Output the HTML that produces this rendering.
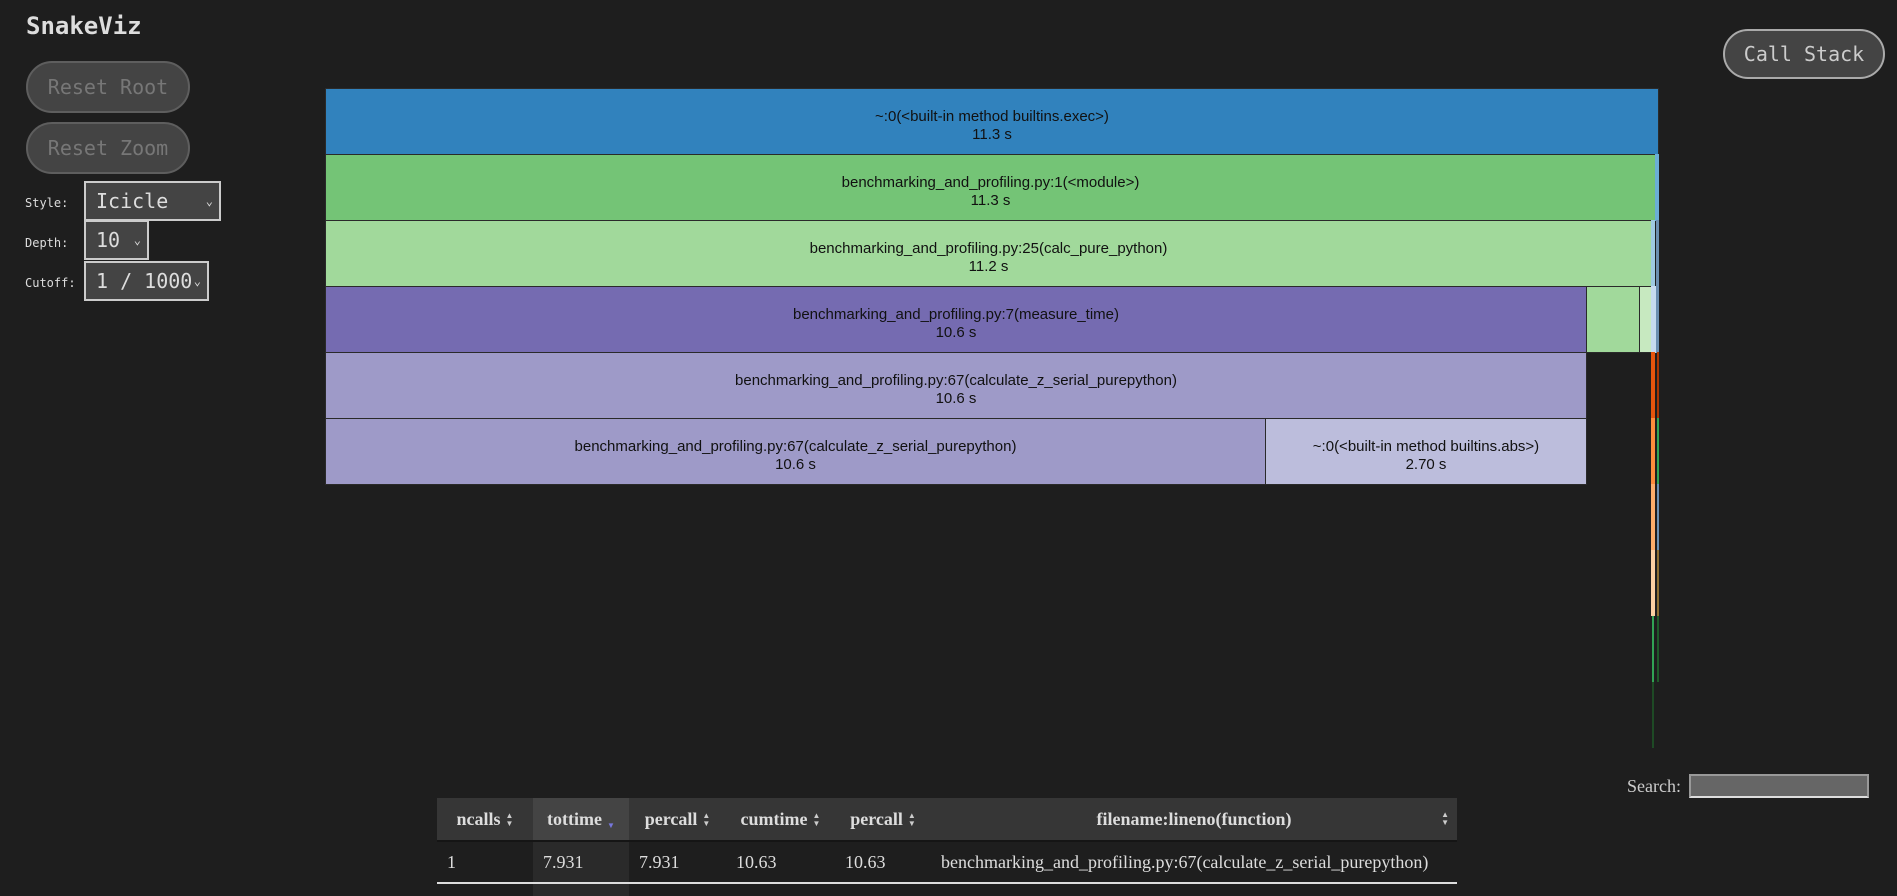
<!DOCTYPE html>
<html style="height:896px;overflow:hidden"><head><meta charset="utf-8"><style>
body{margin:0;width:1897px;height:896px;background:#1e1e1e;overflow:hidden;position:relative;font-family:"DejaVu Sans Mono","Liberation Mono",monospace;}
.a{position:absolute;}
h1{position:absolute;left:26px;top:12px;margin:0;font:bold 24px "DejaVu Sans Mono",monospace;color:#ddd;}
.btn{position:absolute;left:26px;width:160px;height:48px;border:2px solid #5e5e5e;border-radius:26px;background:#444;color:#777;font:20px "DejaVu Sans Mono",monospace;text-align:center;line-height:48px;box-sizing:content-box;}
.lbl{position:absolute;left:25px;font:12px "DejaVu Sans Mono",monospace;color:#ddd;}
.sel{position:absolute;left:84px;background:#444;border:2px solid #ccc;color:#ddd;font:20px "DejaVu Sans Mono",monospace;box-sizing:border-box;padding-left:10px;line-height:36px;}
.sel span{position:absolute;right:6px;top:0;font-size:12px;}
.r{position:absolute;box-sizing:border-box;border:1px solid #2a2a2a;font:15px "Liberation Sans",sans-serif;color:#111;text-align:center;padding-top:19px;line-height:18px;overflow:hidden;}
table{position:absolute;left:437px;top:798px;width:1020px;border-collapse:collapse;table-layout:fixed;font:18px "Liberation Serif",serif;color:#ddd;}
th{background:#363636;height:42px;font-weight:bold;padding:0 4px;white-space:nowrap;}
td{height:40px;padding:0 10px;text-align:left;white-space:nowrap;}
th i{font-style:normal;font-size:8px;line-height:8px;color:#ccc;margin-left:5px;display:inline-block;vertical-align:middle;}
</style></head><body>
<h1>SnakeViz</h1>
<div class="btn" style="top:61px">Reset Root</div>
<div class="btn" style="top:122px">Reset Zoom</div>
<div class="lbl" style="top:196px">Style:</div>
<div class="lbl" style="top:236px">Depth:</div>
<div class="lbl" style="top:276px">Cutoff:</div>
<div class="sel" style="top:181px;width:137px;height:40px">Icicle<span>⌄</span></div>
<div class="sel" style="top:220px;width:65px;height:40px">10<span>⌄</span></div>
<div class="sel" style="top:261px;width:125px;height:40px">1 / 1000<span>⌄</span></div>
<div class="a" style="left:1723px;top:29px;width:158px;height:46px;border:2px solid #aaa;border-radius:25px;background:#444;color:#ccc;font:20px 'DejaVu Sans Mono',monospace;text-align:center;line-height:46px">Call Stack</div>

<div class="r" style="left:325px;top:88px;width:1334px;height:67px;background:#3182bd">~:0(&lt;built-in method builtins.exec&gt;)<br>11.3 s</div>
<div class="r" style="left:325px;top:154px;width:1331px;height:67px;background:#74c476">benchmarking_and_profiling.py:1(&lt;module&gt;)<br>11.3 s</div>
<div class="r" style="left:1655px;top:154px;width:4px;height:67px;background:#6baed6;border:none"></div>
<div class="r" style="left:325px;top:220px;width:1327px;height:67px;background:#a1d99b">benchmarking_and_profiling.py:25(calc_pure_python)<br>11.2 s</div>
<div class="r" style="left:1651px;top:220px;width:4px;height:67px;background:#9ecae1;border:none"></div>
<div class="r" style="left:1656px;top:220px;width:3px;height:67px;background:#6b8fb0;border:none"></div>
<div class="r" style="left:325px;top:286px;width:1262px;height:67px;background:#756bb1">benchmarking_and_profiling.py:7(measure_time)<br>10.6 s</div>
<div class="r" style="left:1586px;top:286px;width:54px;height:67px;background:#a1d99b"></div>
<div class="r" style="left:1639px;top:286px;width:13px;height:67px;background:#c7e9c0"></div>
<div class="r" style="left:1651px;top:286px;width:5px;height:67px;background:#c6dbef;border:none"></div>
<div class="r" style="left:1656px;top:286px;width:3px;height:67px;background:#6b8fb0;border:none"></div>
<div class="r" style="left:325px;top:352px;width:1262px;height:67px;background:#9e9ac8">benchmarking_and_profiling.py:67(calculate_z_serial_purepython)<br>10.6 s</div>
<div class="r" style="left:325px;top:418px;width:941px;height:67px;background:#9e9ac8">benchmarking_and_profiling.py:67(calculate_z_serial_purepython)<br>10.6 s</div>
<div class="r" style="left:1265px;top:418px;width:322px;height:67px;background:#bcbddc">~:0(&lt;built-in method builtins.abs&gt;)<br>2.70 s</div>
<div class="a" style="left:1651px;top:352px;width:4px;height:66px;background:#e6550d"></div>
<div class="a" style="left:1657px;top:352px;width:2px;height:66px;background:#a63603"></div>
<div class="a" style="left:1651px;top:418px;width:4px;height:66px;background:#fd8d3c"></div>
<div class="a" style="left:1657px;top:418px;width:2px;height:66px;background:#31a354"></div>
<div class="a" style="left:1651px;top:484px;width:4px;height:66px;background:#fdae6b"></div>
<div class="a" style="left:1657px;top:484px;width:2px;height:66px;background:#6b8fb0"></div>
<div class="a" style="left:1651px;top:550px;width:4px;height:66px;background:#fdd0a2"></div>
<div class="a" style="left:1657px;top:550px;width:2px;height:66px;background:#8c6d31"></div>
<div class="a" style="left:1652px;top:616px;width:2px;height:66px;background:#31a354"></div>
<div class="a" style="left:1657px;top:616px;width:2px;height:66px;background:#1e5a2a"></div>
<div class="a" style="left:1652px;top:682px;width:2px;height:66px;background:#1e4a25"></div>

<div class="a" style="left:1627px;top:776px;font:18px 'Liberation Serif',serif;color:#ccc">Search:</div>
<div class="a" style="left:1689px;top:774px;width:180px;height:24px;background:#666;border:2px solid #999;border-bottom-color:#ddd;box-sizing:border-box"></div>

<table>
<colgroup><col style="width:96px"><col style="width:96px"><col style="width:97px"><col style="width:109px"><col style="width:96px"><col></colgroup>
<tr><th>ncalls<i>▲<br>▼</i></th><th style="background:#444">tottime<i style="color:#77d;vertical-align:bottom">▼</i></th><th>percall<i>▲<br>▼</i></th><th>cumtime<i>▲<br>▼</i></th><th>percall<i>▲<br>▼</i></th><th style="text-align:center;position:relative">filename:lineno(function)<i style="position:absolute;right:8px;top:13px">▲<br>▼</i></th></tr>
<tr style="border-top:2px solid #151515;border-bottom:2px solid #ddd"><td>1</td><td style="background:#2a2a2a">7.931</td><td>7.931</td><td>10.63</td><td>10.63</td><td>benchmarking_and_profiling.py:67(calculate_z_serial_purepython)</td></tr>
<tr><td>34219980</td><td style="background:#2a2a2a">2.695</td><td>7.877e-08</td><td>2.695</td><td>7.877e-08</td><td>~:0(&lt;built-in method builtins.abs&gt;)</td></tr>
</table>
</body></html>
